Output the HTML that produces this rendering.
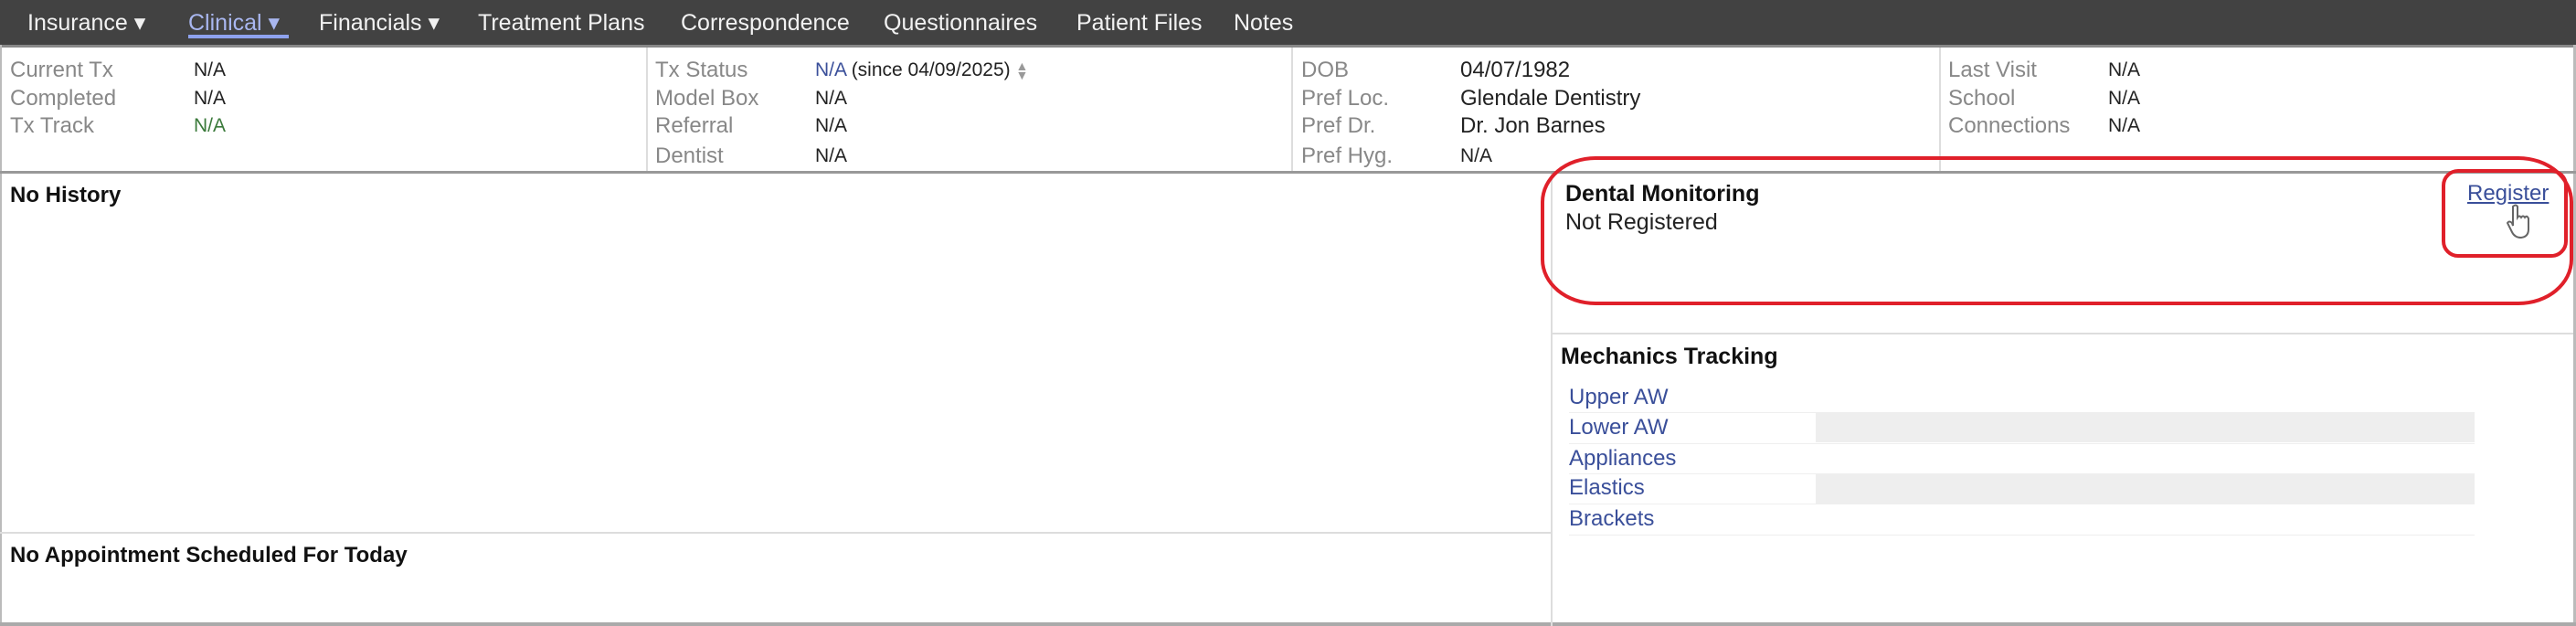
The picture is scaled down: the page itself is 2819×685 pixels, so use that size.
<!DOCTYPE html>
<html><head><meta charset="utf-8"><style>
*{margin:0;padding:0;box-sizing:border-box}
body{width:2819px;height:685px;background:#fff;font-family:"Liberation Sans",Arial,sans-serif;position:relative;overflow:hidden;color:#222}
.a{position:absolute;white-space:nowrap;line-height:28px;font-size:24px}
.nav{position:absolute;left:0;top:0;width:2819px;height:49px;background:#424242}
.n{position:absolute;top:11px;font-size:25px;line-height:28px;color:#f2f2f2;white-space:nowrap}
.l{color:#888}
.b{font-weight:bold;color:#111;font-size:25px}
.lk{color:#3a4f9a}
.vl{position:absolute;width:2px;background:#ddd}
.hl{position:absolute;height:2px;background:#ddd}
</style></head><body>
<div class="nav"></div>
<div class="n" style="left:30px">Insurance ▾</div>
<div class="n" style="left:206px;color:#a9b7f0">Clinical ▾</div>
<div style="position:absolute;left:206px;top:38px;width:110px;height:4px;background:#8ea2ee"></div>
<div class="n" style="left:349px">Financials ▾</div>
<div class="n" style="left:523px">Treatment Plans</div>
<div class="n" style="left:745px">Correspondence</div>
<div class="n" style="left:967px">Questionnaires</div>
<div class="n" style="left:1178px">Patient Files</div>
<div class="n" style="left:1350px">Notes</div>
<div style="position:absolute;left:0;top:49px;width:2819px;height:3px;background:#888"></div>
<div style="position:absolute;left:0;top:49px;width:2px;height:636px;background:#bbb"></div>
<div style="position:absolute;right:0;top:49px;width:3px;height:636px;background:#bbb"></div>
<div style="position:absolute;left:0;bottom:0;width:2819px;height:4px;background:#aaa"></div>

<div class="a l" style="left:11px;top:63px">Current Tx</div><div class="a" style="left:212px;top:63px;font-size:21px">N/A</div>
<div class="a l" style="left:11px;top:94px">Completed</div><div class="a" style="left:212px;top:94px;font-size:21px">N/A</div>
<div class="a l" style="left:11px;top:124px">Tx Track</div><div class="a" style="left:212px;top:124px;font-size:21px;color:#3b7a3b">N/A</div>

<div class="vl" style="left:707px;top:52px;height:135px"></div>
<div class="a l" style="left:717px;top:63px">Tx Status</div><div class="a" style="left:892px;top:63px;font-size:21px"><span class="lk">N/A</span> (since 04/09/2025) <span style="color:#999;font-size:14px;display:inline-block;line-height:10px;vertical-align:middle">▲<br>▼</span></div>
<div class="a l" style="left:717px;top:94px">Model Box</div><div class="a" style="left:892px;top:94px;font-size:21px">N/A</div>
<div class="a l" style="left:717px;top:124px">Referral</div><div class="a" style="left:892px;top:124px;font-size:21px">N/A</div>
<div class="a l" style="left:717px;top:157px">Dentist</div><div class="a" style="left:892px;top:157px;font-size:21px">N/A</div>

<div class="vl" style="left:1413px;top:52px;height:135px"></div>
<div class="a l" style="left:1424px;top:63px">DOB</div><div class="a" style="left:1598px;top:63px">04/07/1982</div>
<div class="a l" style="left:1424px;top:94px">Pref Loc.</div><div class="a" style="left:1598px;top:94px">Glendale Dentistry</div>
<div class="a l" style="left:1424px;top:124px">Pref Dr.</div><div class="a" style="left:1598px;top:124px">Dr. Jon Barnes</div>
<div class="a l" style="left:1424px;top:157px">Pref Hyg.</div><div class="a" style="left:1598px;top:157px;font-size:21px">N/A</div>

<div class="vl" style="left:2122px;top:52px;height:135px"></div>
<div class="a l" style="left:2132px;top:63px">Last Visit</div><div class="a" style="left:2307px;top:63px;font-size:21px">N/A</div>
<div class="a l" style="left:2132px;top:94px">School</div><div class="a" style="left:2307px;top:94px;font-size:21px">N/A</div>
<div class="a l" style="left:2132px;top:124px">Connections</div><div class="a" style="left:2307px;top:124px;font-size:21px">N/A</div>

<div style="position:absolute;left:0;top:187px;width:2819px;height:3px;background:#999"></div>

<div class="a b" style="left:11px;top:200px;font-size:24px">No History</div>
<div class="hl" style="left:0;top:582px;width:1697px"></div>
<div class="a b" style="left:11px;top:594px;font-size:24px">No Appointment Scheduled For Today</div>
<div class="vl" style="left:1697px;top:190px;height:495px"></div>

<div class="a b" style="left:1713px;top:198px">Dental Monitoring</div>
<div class="a" style="left:1713px;top:229px;font-size:25px">Not Registered</div>
<div class="a lk" style="left:2700px;top:198px;text-decoration:underline">Register</div>
<svg style="position:absolute;left:2742px;top:222px" width="30" height="40" viewBox="0 0 30 40"><path d="M8 4 q3-3 5 0 v12 q2-3 4 0 q2-3 4 0 q2-3 4 1 v12 q0 8-8 9 q-7 0-10-6 l-5-10 q2-3 5 0 l1 3 z" fill="#fff" stroke="#666" stroke-width="2"/></svg>

<div class="hl" style="left:1697px;top:364px;width:1119px"></div>
<div class="a b" style="left:1708px;top:376px">Mechanics Tracking</div>
<div style="position:absolute;left:1987px;top:451px;width:721px;height:33px;background:#eee"></div>
<div style="position:absolute;left:1987px;top:518px;width:721px;height:33px;background:#eee"></div>
<div class="hl" style="left:1717px;top:451px;width:991px;height:1px;background:#eee"></div>
<div class="hl" style="left:1717px;top:485px;width:991px;height:1px;background:#eee"></div>
<div class="hl" style="left:1717px;top:518px;width:991px;height:1px;background:#eee"></div>
<div class="hl" style="left:1717px;top:551px;width:991px;height:1px;background:#eee"></div>
<div class="hl" style="left:1717px;top:585px;width:991px;height:1px;background:#eee"></div>
<div class="a lk" style="left:1717px;top:421px">Upper AW</div>
<div class="a lk" style="left:1717px;top:454px">Lower AW</div>
<div class="a lk" style="left:1717px;top:488px">Appliances</div>
<div class="a lk" style="left:1717px;top:520px">Elastics</div>
<div class="a lk" style="left:1717px;top:554px">Brackets</div>

<div style="position:absolute;left:1686px;top:171px;width:1130px;height:163px;border:4px solid #e0202a;border-radius:60px/50px"></div>
<div style="position:absolute;left:2672px;top:185px;width:138px;height:97px;border:4px solid #e0202a;border-radius:18px"></div>
</body></html>
